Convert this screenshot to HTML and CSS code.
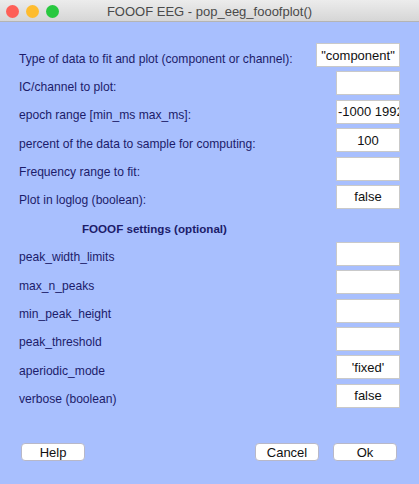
FILE: index.html
```html
<!DOCTYPE html>
<html lang="en">
<head>
<meta charset="UTF-8">
<title>FOOOF EEG - pop_eeg_fooofplot()</title>
<link rel="stylesheet" href="styles.css">
</head>
<body>

<div class="window">
    <!-- title bar -->
    <div class="titlebar">
        <div class="lights">
            <span class="light red"></span>
            <span class="light yellow"></span>
            <span class="light green"></span>
        </div>
        <div class="title">FOOOF EEG - pop_eeg_fooofplot()</div>
    </div>

    <div class="form">
        <div class="row">
            <span class="label">Type of data to fit and plot (component or channel):</span>
            <div class="box wide">"component"</div>
        </div>
        <div class="row">
            <span class="label">IC/channel to plot:</span>
            <div class="box"></div>
        </div>
        <div class="row">
            <span class="label">epoch range [min_ms max_ms]:</span>
            <div class="box left">-1000 1992</div>
        </div>
        <div class="row">
            <span class="label">percent of the data to sample for computing:</span>
            <div class="box">100</div>
        </div>
        <div class="row">
            <span class="label">Frequency range to fit:</span>
            <div class="box"></div>
        </div>
        <div class="row">
            <span class="label">Plot in loglog (boolean):</span>
            <div class="box">false</div>
        </div>

        <div class="row heading">FOOOF settings (optional)</div>

        <div class="row">
            <span class="label">peak_width_limits</span>
            <div class="box"></div>
        </div>
        <div class="row">
            <span class="label">max_n_peaks</span>
            <div class="box"></div>
        </div>
        <div class="row">
            <span class="label">min_peak_height</span>
            <div class="box"></div>
        </div>
        <div class="row">
            <span class="label">peak_threshold</span>
            <div class="box"></div>
        </div>
        <div class="row">
            <span class="label">aperiodic_mode</span>
            <div class="box">'fixed'</div>
        </div>
        <div class="row">
            <span class="label">verbose (boolean)</span>
            <div class="box">false</div>
        </div>
    </div>

    <!-- buttons -->
    <div class="buttons">
        <button class="btn">Help</button>
        <div class="spacer"></div>
        <button class="btn">Cancel</button>
        <button class="btn">Ok</button>
    </div>
</div>

</body>
</html>
```

FILE: styles.css
```css
body {
margin: 0;
font-family: "Liberation Sans", Arial, sans-serif;
}

.window {
width: 419px;
height: 484px;
background: #a8bffe;
display: flex;
flex-direction: column;
overflow: hidden;
}

.titlebar {
height: 22px;
background: linear-gradient(#ececec, #d6d6d6);
border-bottom: 1px solid #b4b4b4;
box-sizing: border-box;
position: relative;
display: flex;
align-items: center;
justify-content: center;
}

.lights {
position: absolute;
left: 6px;
top: 5px;
display: flex;
gap: 7px;
}

.light {
width: 13px;
height: 13px;
border-radius: 50%;
}

.red { background: #fe5f57; }
.yellow { background: #febc2e; }
.green { background: #28c840; }

.title {
font-size: 13px;
color: #4a4a4a;
padding-top: 1px;
}

.form {
padding: 21px 19px 0 19px;
display: flex;
flex-direction: column;
}

.row {
height: 24px;
box-sizing: border-box;
margin-bottom: 4.4px;
display: flex;
align-items: center;
justify-content: space-between;
}

.label {
font-size: 12.1px;
color: #1c1c6a;
padding-top: 7px;
}

.box {
width: 64px;
height: 24px;
box-sizing: border-box;
background: #fff;
border: 1px solid #c9c9c9;
font-size: 13px;
color: #111;
display: flex;
align-items: center;
justify-content: center;
overflow: hidden;
white-space: nowrap;
}

.box.wide {
width: 84px;
}

.box.left {
justify-content: flex-start;
padding-left: 1px;
}

.heading {
justify-content: flex-start;
padding-left: 63px;
padding-top: 7px;
font-weight: bold;
font-size: 11.6px;
color: #1c1c6a;
}

.buttons {
margin-top: 31px;
padding: 0 22px 0 21px;
display: flex;
gap: 14px;
}

.spacer {
flex: 1;
}

.btn {
width: 64px;
height: 18px;
padding: 0;
background: #fff;
border: 1px solid #b8b8c8;
border-radius: 4px;
font-family: "Liberation Sans", Arial, sans-serif;
font-size: 13px;
color: #111;
}
```
